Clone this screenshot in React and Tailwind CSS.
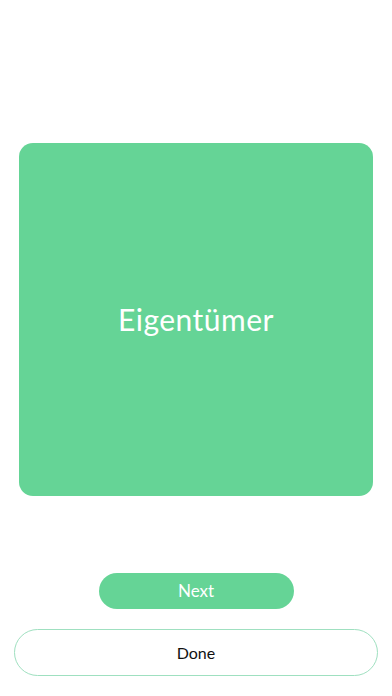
import React from 'react';

export default function App() {
  return (
    <div
      className="w-[392px] h-[696px] bg-white flex flex-col items-center"
      style={{ fontFamily: 'Lato, "Noto Sans", sans-serif' }}
    >
      {/* Card */}
      <div className="mt-[143px] w-[354px] h-[353px] rounded-[14px] bg-[#65d496] flex items-center justify-center">
        <span className="text-white text-[30px] tracking-[0.5px]">Eigentümer</span>
      </div>

      {/* Next */}
      <button className="mt-[77px] w-[195px] h-[36px] rounded-full bg-[#65d496] text-white text-[17px] flex items-center justify-center">
        Next
      </button>

      {/* Done */}
      <button className="mt-[20px] w-[364px] h-[47px] rounded-full border border-[#9fe0c0] bg-white text-[#111] text-[16px] font-normal flex items-center justify-center">
        Done
      </button>
    </div>
  );
}
